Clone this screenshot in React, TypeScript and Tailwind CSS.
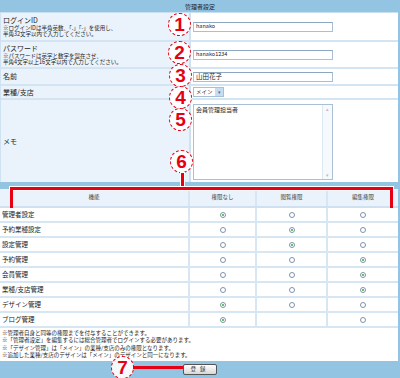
import type { ReactNode } from 'react';

type Perm = { name: string; marks: Array<'on' | 'off' | 'none'> };

const perms: Perm[] = [
    { name: '管理者設定', marks: ['on', 'off', 'off'] },
    { name: '予約業種設定', marks: ['off', 'on', 'off'] },
    { name: '設定管理', marks: ['off', 'on', 'off'] },
    { name: '予約管理', marks: ['off', 'off', 'on'] },
    { name: '会員管理', marks: ['off', 'off', 'on'] },
    { name: '業種/支店管理', marks: ['off', 'off', 'on'] },
    { name: 'デザイン管理', marks: ['on', 'off', 'off'] },
    { name: 'ブログ管理', marks: ['on', 'none', 'off'] },
];

const notes = [
    '※管理者自身と同等の権限までを付与することができます。',
    '※「管理者設定」を編集するには総合管理者でログインする必要があります。',
    '※「デザイン管理」は「メイン」の業種/支店のみの権限となります。',
    '※追加した業種/支店のデザインは「メイン」のデザインと同一になります。',
];

export default function App() {
    return (
        <div className="relative h-[378px] w-[400px] overflow-hidden bg-[#93c4e1] font-['Noto_Sans_CJK_JP',sans-serif] text-[#222]">
            <div className="flex h-[12px] items-center justify-center text-[6px] text-[#222]">
                管理者設定
            </div>
            <div className="h-[1px] w-[398px] bg-[#c8e0f0]" />

            <div className="w-[398px] border-l border-[#cfe2f1]">
                <FormRow
                    h="h-[29px]"
                    label={
                        <div>
                            <p className="text-[7px] leading-[9px]">ログインID</p>
                            <p className="text-[5.5px] leading-[6.5px]">
                                ※ログインIDは半角英数、「.」「-」を使用し、
                            </p>
                            <p className="text-[5.5px] leading-[6.5px]">
                                半角32文字以内で入力してください。
                            </p>
                        </div>
                    }
                >
                    <Field value="hanako" />
                </FormRow>
                <FormRow
                    h="h-[27px]"
                    label={
                        <div>
                            <p className="text-[7px] leading-[9px]">パスワード</p>
                            <p className="text-[5.5px] leading-[6.5px]">
                                ※パスワードは英字と数字を混在させ、
                            </p>
                            <p className="text-[5.5px] leading-[6.5px]">
                                半角4文字以上16文字以内で入力してください。
                            </p>
                        </div>
                    }
                >
                    <Field value="hanako1234" />
                </FormRow>
                <FormRow
                    h="h-[17px]"
                    label={<p className="text-[7px] leading-[9px]">名前</p>}
                >
                    <Field value="山田花子" big />
                </FormRow>
                <FormRow
                    h="h-[14px]"
                    label={<p className="text-[7px] leading-[9px]">業種/支店</p>}
                >
                    <div className="flex h-[10px] w-[31px] items-center justify-between border border-[#a9bfd6] bg-white pl-[2px] text-[5.5px]">
                        <span>メイン</span>
                        <span className="flex h-full w-[8px] items-center justify-center bg-[#c6dcf0] text-[5px] text-[#4a6a90]">
                            ▾
                        </span>
                    </div>
                </FormRow>
                <FormRow
                    h="h-[82px]"
                    last
                    label={<p className="text-[7px] leading-[9px]">メモ</p>}
                >
                    <div className="mt-[1px] flex h-[76px] w-[140px] border border-[#a9bfd6] bg-white">
                        <p className="flex-1 px-[2px] pt-[1px] text-[6px] leading-[8px]">
                            会員管理担当者
                        </p>
                        <div className="flex w-[10px] flex-col justify-between border-l border-[#dde8f2] bg-[#f7fafd] text-center text-[5px] leading-[8px] text-[#c9b5b5]">
                            <span>▴</span>
                            <span>▾</span>
                        </div>
                    </div>
                </FormRow>
            </div>

            <div className="h-[7px]" />

            <div className="w-[398px] bg-white">
                <div className="grid h-[19px] grid-cols-[190px_67px_71px_1fr] border-b-2 border-[#cfe1f0] bg-[#eaf3fb] text-[5.5px] text-[#444]">
                    <HeadCell>機能</HeadCell>
                    <HeadCell>権限なし</HeadCell>
                    <HeadCell>閲覧権限</HeadCell>
                    <HeadCell last>編集権限</HeadCell>
                </div>
                {perms.map((perm) => (
                    <div
                        key={perm.name}
                        className="grid h-[15px] grid-cols-[190px_67px_71px_1fr] border-b-2 border-[#d6e6f3]"
                    >
                        <div className="flex items-center border-r-2 border-[#d6e6f3] pl-[2px] text-[6.5px]">
                            {perm.name}
                        </div>
                        {perm.marks.map((mark, i) => (
                            <div
                                key={i}
                                className={`flex items-center justify-center ${i < 2 ? 'border-r-2 border-[#d6e6f3]' : ''}`}
                            >
                                {mark !== 'none' && <Radio on={mark === 'on'} />}
                            </div>
                        ))}
                    </div>
                ))}
                <div className="h-[33px] pl-[2px] pt-[2px] text-[5.5px] leading-[7.3px]">
                    {notes.map((note) => (
                        <p key={note} className="whitespace-nowrap">
                            {note}
                        </p>
                    ))}
                </div>
            </div>

            <div className="flex justify-center pt-[3px]">
                <button
                    type="button"
                    className="h-[11px] w-[34px] rounded-[2px] border border-[#555] bg-gradient-to-b from-white to-[#d8d8d8] text-[5.5px] leading-[9px] tracking-[4px] text-[#333]"
                >
                    登録
                </button>
            </div>

            {/* red annotations */}
            <Badge n="1" x={168} y={13} />
            <Badge n="2" x={168} y={41} />
            <Badge n="3" x={169} y={64} />
            <Badge n="4" x={169} y={86} />
            <Badge n="5" x={169} y={108} />
            <Badge n="6" x={170} y={150} />
            <Badge n="7" x={111} y={356} />

            <div className="absolute left-[181px] top-[173px] h-[16px] w-[3px] bg-[#e60012] outline outline-1 outline-white" />
            <div className="absolute left-[10px] top-[187px] h-[3px] w-[383px] bg-[#e60012] outline outline-1 outline-white" />
            <div className="absolute left-[10px] top-[187px] h-[21px] w-[3px] bg-[#e60012]" />
            <div className="absolute left-[390px] top-[187px] h-[21px] w-[3px] bg-[#e60012]" />
            <div className="absolute left-[133px] top-[366px] h-[3px] w-[50px] bg-[#e60012]" />
        </div>
    );
}

function FormRow({
    h,
    label,
    children,
    last,
}: {
    h: string;
    label: ReactNode;
    children: ReactNode;
    last?: boolean;
}) {
    return (
        <div
            className={`grid ${h} grid-cols-[190px_1fr] ${last ? '' : 'border-b-2 border-[#d3e5f3]'}`}
        >
            <div className="flex items-center border-r-2 border-[#cfe1f0] bg-[#eaf3fb] pl-[2px]">
                {label}
            </div>
            <div className="flex items-center bg-white pl-[2px]">{children}</div>
        </div>
    );
}

function Field({ value, big }: { value: string; big?: boolean }) {
    return (
        <div
            className={`flex h-[10px] w-[140px] items-center border border-[#a9bfd6] border-t-[#8ea6bf] bg-white px-[2px] ${big ? 'text-[6.5px]' : 'text-[5.5px]'}`}
        >
            {value}
        </div>
    );
}

function HeadCell({ children, last }: { children: ReactNode; last?: boolean }) {
    return (
        <div
            className={`flex items-center justify-center ${last ? '' : 'border-r-2 border-[#d6e6f3]'}`}
        >
            {children}
        </div>
    );
}

function Radio({ on }: { on: boolean }) {
    return (
        <span className="flex h-[6px] w-[6px] items-center justify-center rounded-full border border-[#7f93ab] bg-white">
            {on && <span className="h-[2px] w-[2px] rounded-full bg-[#2bb02b]" />}
        </span>
    );
}

function Badge({ n, x, y }: { n: string; x: number; y: number }) {
    return (
        <div
            className="absolute flex h-[23px] w-[23px] items-center justify-center rounded-full border border-dashed border-[#e60012] bg-white/90 font-['Liberation_Sans',sans-serif] text-[19px] font-black leading-none text-[#e60012]"
            style={{ left: x, top: y }}
        >
            {n}
        </div>
    );
}
